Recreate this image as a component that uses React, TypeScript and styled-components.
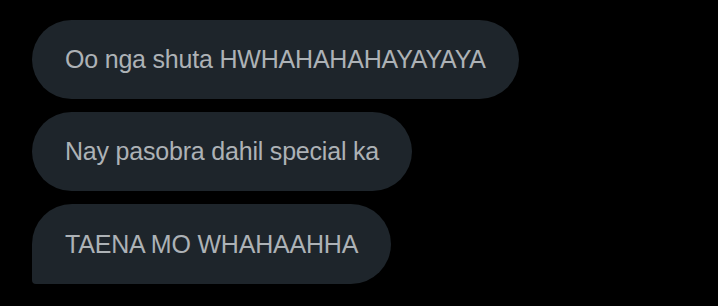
import React from 'react';
import styled, { createGlobalStyle } from 'styled-components';

const Global = createGlobalStyle`
   html, body {
      margin: 0;
      padding: 0;
      background: #000000;
   }
`;

const Thread = styled.div`
   display: flex;
   flex-direction: column;
   align-items: flex-start;
   gap: 13px;
   padding: 20px 0 0 32px;
   width: 718px;
   height: 306px;
   box-sizing: border-box;
   background: #000000;
`;

const Bubble = styled.div<{ $last?: boolean }>`
   display: flex;
   align-items: center;
   height: ${({ $last }) => ($last ? '80px' : '79px')};
   box-sizing: border-box;
   padding: 0 33px;
   border-radius: ${({ $last }) => ($last ? '40px 40px 40px 4px' : '40px')};
   background: #1e252b;
   color: #adb2b6;
   font-family: 'Liberation Sans', Arial, sans-serif;
   font-size: 25px;
   letter-spacing: -0.2px;
   white-space: nowrap;
`;

const messages = [
   'Oo nga shuta HWHAHAHAHAYAYAYA',
   'Nay pasobra dahil special ka',
   'TAENA MO WHAHAAHHA',
];

export default function App() {
   return (
      <>
         <Global />
         <Thread>
            {messages.map((m, i) => (
               <Bubble key={i} $last={i === messages.length - 1}>
                  {m}
               </Bubble>
            ))}
         </Thread>
      </>
   );
}
